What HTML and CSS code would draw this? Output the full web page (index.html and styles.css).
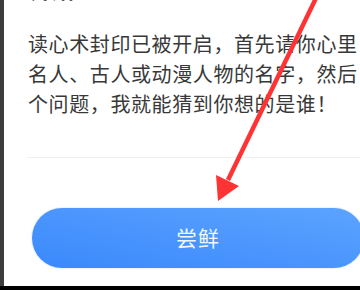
FILE: index.html
```html
<!DOCTYPE html>
<html lang="zh-CN">
<head>
    <meta charset="UTF-8">
    <meta name="viewport" content="width=device-width, initial-scale=1.0">
    <title>读心术</title>
    <link rel="stylesheet" href="styles.css">
</head>
<body>
    <div class="frame">
        <div class="screen">
            <div class="card">
                <h2 class="card-title">开始</h2>
                <p class="intro">读心术封印已被开启，首先请你心里名人、古人或动漫人物的名字，然后个问题，我就能猜到你想的是谁！</p>
                <div class="divider"></div>
                <button class="try-btn">尝鲜</button>
            </div>
        </div>
        <div class="bottom-bar"></div>
    </div>

    <!-- red annotation arrow drawn over the screenshot -->
    <svg class="arrow" width="360" height="290" viewBox="0 0 360 290">
        <line x1="317" y1="-4" x2="228" y2="180" stroke="#ff3333" stroke-width="4.5"/>
        <polygon points="216,175 239,186 218,201" fill="#ff3333"/>
    </svg>
</body>
</html>
```

FILE: styles.css
```css
body {
    margin: 0;
    padding: 0;
    width: 360px;
    height: 290px;
    overflow: hidden;
    position: relative;
    font-family: "Noto Sans CJK SC", "Noto Sans", sans-serif;
}
.frame {
    display: flex;
    flex-direction: column;
    height: 290px;
    background: #000;
}
.screen {
    flex: 1;
    display: flex;
    border-left: 4px solid #3d3d3d;
    background: #fff;
    overflow: hidden;
}
.bottom-bar {
    height: 4px;
    background: #000;
}
.card {
    width: 400px;
    flex-shrink: 0;
    padding-left: 24px;
}
.card-title {
    margin: -23px 0 0 2px;
    font-size: 22px;
    line-height: 22px;
    font-weight: bold;
    color: #2b2b2b;
}
.intro {
    width: 338px;
    margin: 30px 0 0;
    font-size: 20px;
    line-height: 30px;
    letter-spacing: 0.6px;
    color: #383838;
}
.divider {
    height: 1px;
    margin: 38px 0 0 -1px;
    background: #efefef;
}
.try-btn {
    display: block;
    width: 332px;
    height: 60px;
    margin: 50px 0 0 4px;
    padding-bottom: 4px;
    border: none;
    border-radius: 30px;
    background: linear-gradient(to right top, #3a88fc, #5ca4ff);
    color: #f2f7ff;
    font-family: "Noto Sans CJK SC", sans-serif;
    font-size: 21px;
    letter-spacing: 1px;
    box-shadow: 0 0 2px rgba(60, 130, 250, 0.35);
}
.arrow {
    position: absolute;
    left: 0;
    top: 0;
}
```
